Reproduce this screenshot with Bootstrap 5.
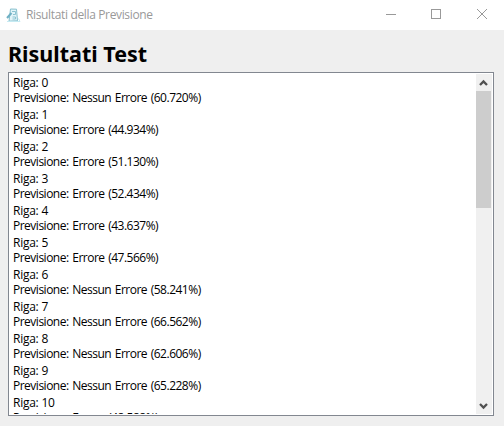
<!DOCTYPE html>
<html lang="it">
<head>
<meta charset="utf-8">
<meta name="viewport" content="width=device-width, initial-scale=1">
<title>Risultati della Previsione</title>
<link href="https://cdn.jsdelivr.net/npm/bootstrap@5.3.0/dist/css/bootstrap.min.css" rel="stylesheet">
<style>
body{width:504px;height:426px;background:#efefef;font-family:"Open Sans","Noto Sans",sans-serif;font-size:12px;color:#000}
.titlebar{height:30px;padding-left:6px;color:#999}
.titlebar .caption{font-size:12px;letter-spacing:-.35px;line-height:30px;margin-left:5px}
.winbtn{width:45px;height:30px}
.heading{font-family:"Noto Sans","Open Sans",sans-serif;font-size:21.5px;line-height:26px;color:#000;height:42px;padding:11px 0 0 8px;letter-spacing:0}
.results{width:486px;height:344px;margin-left:8px;border:1px solid #828790;background:#fff;padding:1px 1px 0}
.rows{padding:1px 0 0 3px;margin-bottom:1px;white-space:nowrap}
.riga{height:16px;line-height:16px;letter-spacing:-.25px}
.prev{height:16px;line-height:14px;letter-spacing:-.5px;word-spacing:1px}
.scroll{width:16px;background:#f0f0f0;padding-right:1px;margin-bottom:1px}
.arrow{height:17px}
.thumb{height:117px;background:#cdcdcd}
</style>
</head>
<body class="d-flex flex-column overflow-hidden">
<header class="titlebar d-flex align-items-center bg-white flex-shrink-0">
  <svg width="15" height="15" viewBox="0 0 15 15" fill="none">
    <path d="M4.500 1 10.500 1.200 11.500 12.800 3 13.200Z" fill="#e2f4f8" stroke="#86c0ce"/>
    <path d="M6 3.500h3.500v3H7M6.500 9h3v2h-3" stroke="#8cc3d1"/>
    <path d="M1 10 5.500 5" stroke="#6fb0c4" stroke-width="2"/>
    <path d="M1 13.500h13l-1.500-3" stroke="#c5eaf2"/>
  </svg>
  <span class="caption">Risultati della Previsione</span>
  <div class="d-flex ms-auto">
    <svg class="winbtn" viewBox="0 0 45 30"><path d="M17 14.5h10" stroke="#999"/></svg>
    <svg class="winbtn" viewBox="0 0 45 30"><rect x="17.5" y="9.5" width="9" height="9" fill="none" stroke="#999"/></svg>
    <svg class="winbtn" viewBox="0 0 45 30"><path d="M18 9l10 10M28 9 18 19" stroke="#999"/></svg>
  </div>
</header>
<h1 class="heading fw-bold m-0 flex-shrink-0">Risultati Test</h1>
<main class="results d-flex flex-shrink-0">
  <div class="rows flex-grow-1 overflow-hidden">
    <div class="riga">Riga: 0</div><div class="prev">Previsione: Nessun Errore (60.720%)</div>
    <div class="riga">Riga: 1</div><div class="prev">Previsione: Errore (44.934%)</div>
    <div class="riga">Riga: 2</div><div class="prev">Previsione: Errore (51.130%)</div>
    <div class="riga">Riga: 3</div><div class="prev">Previsione: Errore (52.434%)</div>
    <div class="riga">Riga: 4</div><div class="prev">Previsione: Errore (43.637%)</div>
    <div class="riga">Riga: 5</div><div class="prev">Previsione: Errore (47.566%)</div>
    <div class="riga">Riga: 6</div><div class="prev">Previsione: Nessun Errore (58.241%)</div>
    <div class="riga">Riga: 7</div><div class="prev">Previsione: Nessun Errore (66.562%)</div>
    <div class="riga">Riga: 8</div><div class="prev">Previsione: Nessun Errore (62.606%)</div>
    <div class="riga">Riga: 9</div><div class="prev">Previsione: Nessun Errore (65.228%)</div>
    <div class="riga">Riga: 10</div><div class="prev">Previsione: Errore (48.588%)</div>
  </div>
  <div class="scroll d-flex flex-column flex-shrink-0">
    <svg class="arrow" viewBox="0 0 15 17"><path d="M4 11 7.5 7.5 11 11" fill="none" stroke="#505050" stroke-width="2.3"/></svg>
    <div class="thumb"></div>
    <svg class="arrow mt-auto" viewBox="0 0 15 17"><path d="M4 7 7.5 10.500 11 7" fill="none" stroke="#505050" stroke-width="2.3"/></svg>
  </div>
</main>
<script src="https://cdn.jsdelivr.net/npm/bootstrap@5.3.0/dist/js/bootstrap.bundle.min.js"></script>
</body>
</html>
